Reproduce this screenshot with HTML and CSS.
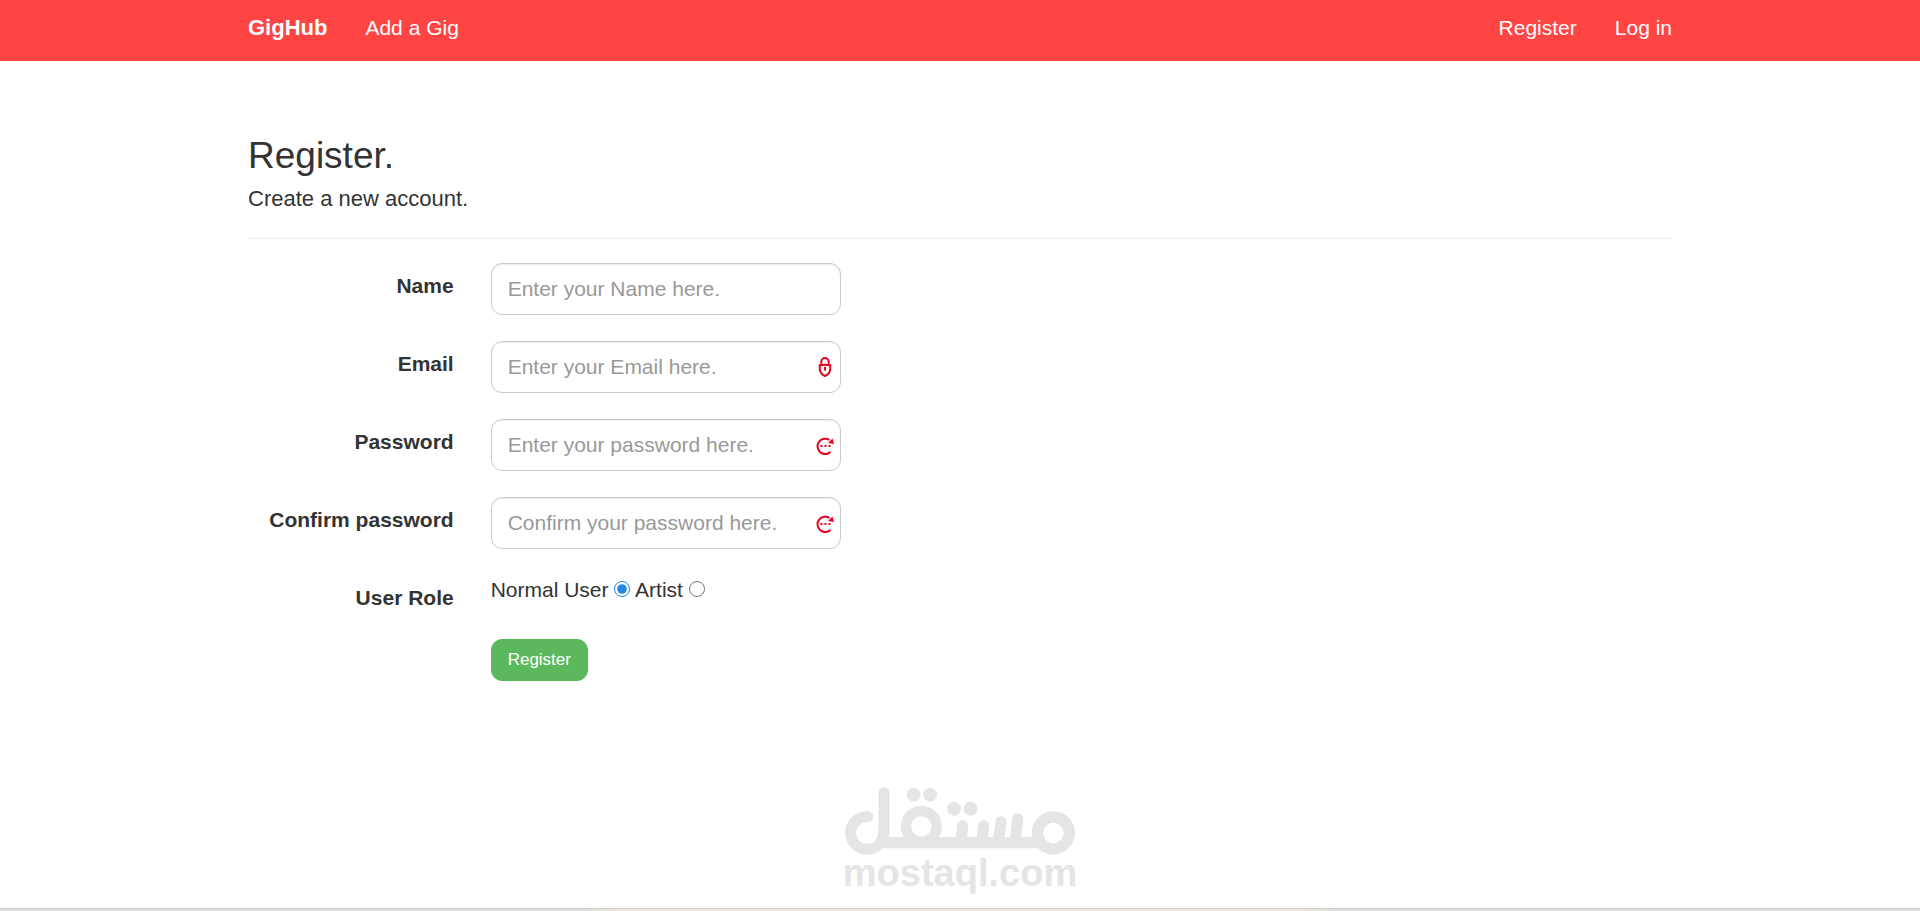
FILE: index.html
```html
<!DOCTYPE html>
<html lang="en">
<head>
  <meta charset="UTF-8" />
  <meta name="viewport" content="width=device-width, initial-scale=1.0" />
  <title>Register - GigHub</title>
  <link rel="stylesheet" href="styles.css">
</head>
<body>

  <nav class="navbar">
    <div class="container nav-inner">
      <a href="#" class="brand">GigHub</a>
      <a href="#" class="nav-link">Add a Gig</a>
      <div class="nav-right">
        <a href="#" class="nav-link">Register</a>
        <a href="#" class="nav-link">Log in</a>
      </div>
    </div>
  </nav>

  <main class="container content">
    <h2>Register.</h2>
    <h4>Create a new account.</h4>
    <hr />

    <form class="register-form">
      <div class="form-group">
        <label class="control-label" for="name">Name</label>
        <div class="field">
          <input type="text" class="form-control" id="name" placeholder="Enter your Name here." />
        </div>
      </div>

      <div class="form-group">
        <label class="control-label" for="email">Email</label>
        <div class="field">
          <input type="email" class="form-control" id="email" placeholder="Enter your Email here." />
          <svg class="field-icon" viewBox="0 0 20 20">
            <path d="M6.300 8.500V5a3.700 4 0 0 1 7.400 0v3.500" />
            <path d="M4.800 8.200q5.200-1 10.400 0v3.800c0 3.500-2.400 5.700-5.200 7c-2.800-1.300-5.200-3.500-5.200-7z" />
            <path class="solid" d="M8.800 11a1.200 1.200 0 0 1 2.400 0l-.600 3h-1.200z" />
          </svg>
        </div>
      </div>

      <div class="form-group">
        <label class="control-label" for="password">Password</label>
        <div class="field">
          <input type="password" class="form-control" id="password" placeholder="Enter your password here." />
          <svg class="field-icon" viewBox="0 0 20 20">
            <path d="M15.500 17a7.700 7.700 0 1 1-1-12" />
            <path class="solid" d="M17.500 3.500l1.500 5.500l-6-1z" />
            <path class="solid" d="M5.500 10h2v2h-2zM9.500 10h2v2h-2zM13.500 10h2v2h-2z" />
          </svg>
        </div>
      </div>

      <div class="form-group">
        <label class="control-label" for="confirm">Confirm password</label>
        <div class="field">
          <input type="password" class="form-control" id="confirm" placeholder="Confirm your password here." />
          <svg class="field-icon" viewBox="0 0 20 20">
            <path d="M15.500 17a7.700 7.700 0 1 1-1-12" />
            <path class="solid" d="M17.500 3.500l1.500 5.500l-6-1z" />
            <path class="solid" d="M5.500 10h2v2h-2zM9.500 10h2v2h-2zM13.500 10h2v2h-2z" />
          </svg>
        </div>
      </div>

      <div class="form-group" role="radiogroup" aria-labelledby="role-label">
        <span class="control-label" id="role-label">User Role</span>
        <div class="roles">
          <label for="normal">Normal User</label>
          <input type="radio" id="normal" name="role" checked />
          <label for="artist">Artist</label>
          <input type="radio" id="artist" name="role" />
        </div>
      </div>

      <div class="form-group">
        <span></span>
        <div class="actions">
          <button type="submit" class="btn">Register</button>
        </div>
      </div>
    </form>
  </main>

  <div class="watermark">
    <svg class="watermark-logo" viewBox="75 50 690 204">
      <circle cx="700" cy="188" r="48" stroke-width="34" />
      <line x1="190" y1="217" x2="648" y2="217" stroke-width="34" />
      <circle cx="304" cy="168" r="46" stroke-width="31" />
      <line x1="428" y1="166" x2="423" y2="215" />
      <line x1="491" y1="166" x2="486" y2="215" />
      <line x1="543" y1="154" x2="535" y2="215" />
      <line x1="593" y1="145" x2="585" y2="215" />
      <line x1="192" y1="67" x2="192" y2="190" />
      <circle cx="141" cy="188" r="49" stroke-dasharray="232 400" />
      <g class="dots">
        <circle cx="281" cy="73" r="21" />
        <circle cx="330" cy="73" r="21" />
        <circle cx="402" cy="115" r="21" />
        <circle cx="452" cy="115" r="21" />
      </g>
    </svg>
    <span>mostaql.com</span>
  </div>

  <footer class="bottom-strip"></footer>

</body>
</html>
```

FILE: styles.css
```css
* {
  box-sizing: border-box;
}

body {
  margin: 0;
  min-height: 100vh;
  display: flex;
  flex-direction: column;
  background: #fff;
  color: #333;
  font-family: "Liberation Sans", Arial, sans-serif;
  font-size: 21px;
  line-height: 30px;
}

.container {
  width: 100%;
  max-width: 1462px;
  margin: 0 auto;
  padding: 0 19px;
}

/* navbar */
.navbar {
  background: #ff4444;
}

.nav-inner {
  display: flex;
  align-items: center;
  gap: 38px;
  padding-top: 13px;
  padding-bottom: 18px;
}

.nav-inner a {
  color: #fff;
  text-decoration: none;
}

.brand {
  font-size: 22px;
  font-weight: bold;
}

.nav-right {
  display: flex;
  gap: 38px;
  margin-left: auto;
}

/* page */
.content {
  padding-top: 74px;
}

h2,
h4 {
  margin: 0;
  font-weight: normal;
}

h2 {
  margin-bottom: 11px;
  font-size: 37px;
  line-height: 41px;
}

h4 {
  font-size: 22px;
  line-height: 24px;
}

hr {
  margin: 27px 0 24px;
  border: 0;
  border-top: 1px solid #eee;
}

/* form */
.register-form {
  display: flex;
  flex-direction: column;
  gap: 26px;
  margin: 0 -19px;
}

.form-group {
  display: grid;
  grid-template-columns: 1fr 5fr;
}

.control-label {
  padding: 8px 19px 0;
  font-weight: bold;
  text-align: right;
  white-space: nowrap;
}

.field {
  position: relative;
  max-width: 350px;
  margin-left: 18px;
}

.form-control {
  display: block;
  width: 100%;
  height: 52px;
  padding: 8px 16px;
  border: 1px solid #ccc;
  border-radius: 11px;
  background: #fff;
  box-shadow: inset 0 1px 1px rgba(0, 0, 0, 0.075);
  color: #555;
  font: inherit;
}

.form-control::placeholder {
  color: #999;
}

.field-icon {
  position: absolute;
  top: 16px;
  right: 6px;
  width: 20px;
  height: 20px;
  fill: none;
  stroke: #e8001f;
  stroke-width: 2;
}

.field-icon .solid {
  fill: #e8001f;
  stroke: none;
}

.roles,
.actions {
  padding: 0 18px;
}

.roles input {
  width: 16px;
  height: 16px;
  margin: 0;
  accent-color: #2488e0;
}

.btn {
  display: block;
  padding: 8px 16px;
  border: 1px solid #5cb85c;
  border-radius: 11px;
  background: #5cb85c;
  color: #fff;
  font-family: inherit;
  font-size: 17px;
  line-height: 24px;
  cursor: pointer;
}

/* watermark */
.watermark {
  display: flex;
  flex-direction: column;
  align-items: center;
  margin-top: auto;
  padding-bottom: 17px;
  color: #e5e5e5;
  font-size: 38px;
  font-weight: bold;
  line-height: 36px;
}

.watermark-logo {
  width: 230px;
  height: 68px;
  fill: none;
  stroke: #e5e5e5;
  stroke-width: 33;
  stroke-linecap: round;
}

.watermark-logo .dots {
  fill: #e5e5e5;
  stroke: none;
}

.bottom-strip {
  height: 3px;
  border-top: 1px solid #d0d0cc;
  background: linear-gradient(to right, #dcdcdc 30%, #f0e8da 33%, #f0e8da 67%, #dcdcdc 70%);
}
```
